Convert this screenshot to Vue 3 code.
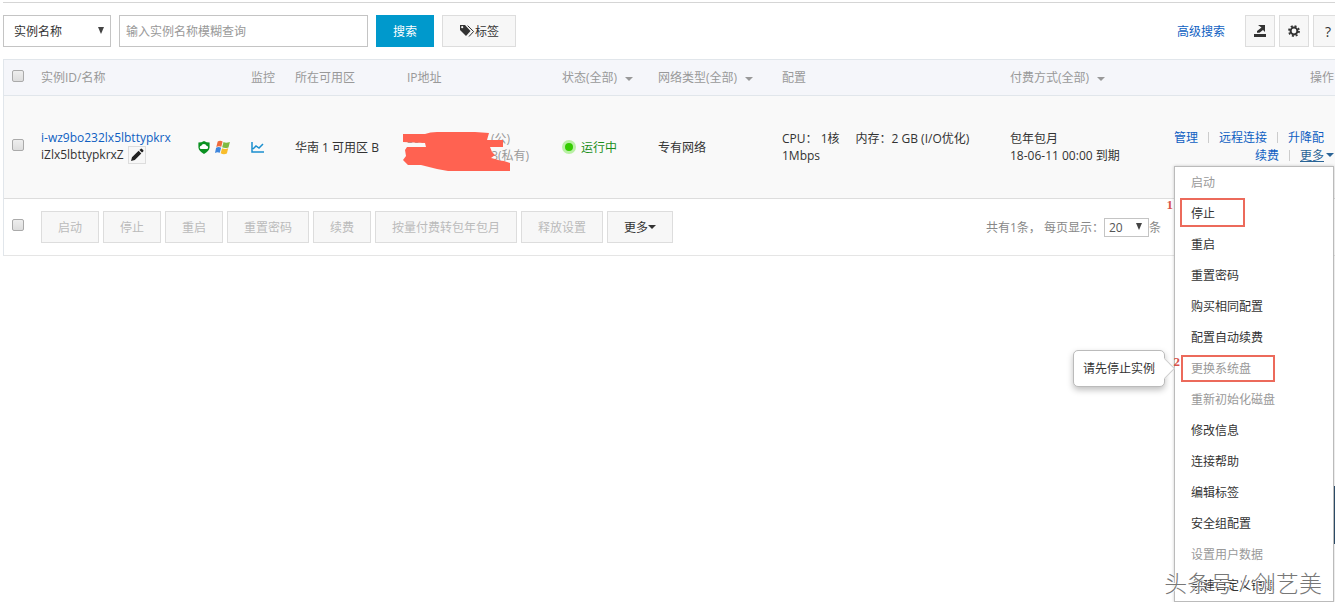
<template>
  <div class="page">
    <form class="toolbar" @submit.prevent>
      <div class="select-wrap field-select">
        <select v-model="field" aria-label="查询字段">
          <option>实例名称</option>
          <option>实例ID</option>
        </select>
      </div>
      <input v-model="keyword" class="keyword" type="text" aria-label="关键字" placeholder="输入实例名称模糊查询" />
      <button class="btn primary" type="submit">搜索</button>
      <button class="btn tag-btn" type="button">
        <svg width="16" height="14" viewBox="0 0 16 14" aria-hidden="true">
          <path d="M1 1h5l5.500 6-4.500 5L1 6z" fill="#333" />
          <circle cx="3.2" cy="3.2" r="1.1" fill="#f7f7f7" />
          <path d="M8.600 1.600l6 5.900-4.600 5" fill="none" stroke="#333" />
        </svg>标签
      </button>
      <div class="tools">
        <a href="#" class="advanced">高级搜索</a>
        <button class="btn icon" type="button" aria-label="导出">
          <svg width="12" height="14" viewBox="0 0 12 14" aria-hidden="true">
            <path d="M0 10h12v3H0zM4 1h7v7L9 6 5.500 8.800H3V7l4.500-3.500z" fill="#333" />
          </svg>
        </button>
        <button class="btn icon" type="button" aria-label="设置">
          <svg width="12" height="12" viewBox="0 0 12 12" aria-hidden="true">
            <g fill="none" stroke="#333">
              <circle cx="6" cy="6" r="3.4" stroke-width="2" />
              <circle cx="6" cy="6" r="5" stroke-width="1.8" stroke-dasharray="2 1.927" />
            </g>
          </svg>
        </button>
        <button class="btn icon help" type="button">?</button>
      </div>
    </form>

    <table class="instances">
      <colgroup>
        <col v-for="c in cols" :key="c" :class="'col-' + c" />
      </colgroup>
      <thead>
        <tr>
          <th class="check"><input type="checkbox" aria-label="全选" /></th>
          <th>实例ID/名称</th>
          <th>监控</th>
          <th>所在可用区</th>
          <th>IP地址</th>
          <th>状态(全部)<i class="caret"></i></th>
          <th>网络类型(全部)<i class="caret"></i></th>
          <th>配置</th>
          <th>付费方式(全部)<i class="caret"></i></th>
          <th class="actions">操作</th>
        </tr>
      </thead>
      <tbody>
        <tr>
          <td class="check"><input type="checkbox" aria-label="选择实例" /></td>
          <td>
            <div class="name-cell">
              <div class="raised">
                <a href="#">i-wz9bo232lx5lbttypkrx</a>
                <div class="alias">
                  iZlx5lbttypkrxZ
                  <button class="edit" type="button" aria-label="修改名称">
                    <svg width="14" height="14" viewBox="0 0 14 14" aria-hidden="true">
                      <path d="M1 13l1-3.8 6.6-6.5 2.7 2.7-6.5 6.6zM9.4 2l1.2-1.1q.7-.6 1.4 0l1.2 1.2q.6.7 0 1.4L12 4.6z" fill="#222" />
                    </svg>
                  </button>
                </div>
              </div>
              <div class="os-icons">
                <svg width="12" height="13" viewBox="0 0 12 13" aria-hidden="true">
                  <path d="M6 0q2.5 1.6 5.6 1.6v5Q11 10.6 6 13 1 10.6.4 6.6v-5Q3.500 1.600 6 0z" fill="#0b9121" />
                  <path d="M3.300 8a1.600 1.600 0 0 1 0-3.200 2.700 2.500 0 0 1 5.200 0 1.600 1.600 0 0 1 0 3.200z" fill="#fff" />
                </svg>
                <svg width="16" height="15" viewBox="0 0 16 15" aria-hidden="true">
                  <path d="M2.700 1.600Q5 .2 7.600 1.500L6.300 6.700Q3.800 5.500 1.300 6.900z" fill="#ef6b3c" />
                  <path d="M8.500 2Q11 3.400 14.900 1.900L13.500 7.400Q10 8.700 7.200 7.200z" fill="#7fba42" />
                  <path d="M1.100 7.800Q3.600 6.500 6.100 7.700L4.800 12.700Q2.300 11.500 0 12.900z" fill="#3f86dd" />
                  <path d="M7 8.200Q9.700 9.600 13.200 8.300L11.900 13.500Q8.600 14.900 5.700 13.200z" fill="#f8bd2c" />
                </svg>
              </div>
            </div>
          </td>
          <td>
            <a href="#" class="chart" aria-label="监控图">
              <svg width="13" height="11" viewBox="0 0 13 11" aria-hidden="true">
                <path d="M1 0v10h12M2 7l3-3 3 2 4-4" fill="none" stroke="#1b8fce" stroke-width="1.500" />
              </svg>
            </a>
          </td>
          <td>华南 1 可用区 B</td>
          <td>
            <div class="ip-cell">
              <div><span class="ip-num">39.1</span>(公)</div>
              <div><span class="ip-num private">3</span>(私有)</div>
              <svg class="scribble" width="110" height="40" viewBox="0 0 110 40" aria-hidden="true">
                <path d="M0 2h22q5-2 12-2h38l14 1-2 7h16v7H87l2 5 3 3-4 3 4 1q5 2 9 2l6 2v8H45L34 37 18 33 5 33 0 28l3-4-1-6 2-3h19l-1-4L0 10z" fill="#ff6251" />
              </svg>
            </div>
          </td>
          <td class="status">
            <span class="running"><i class="dot"></i>运行中</span>
          </td>
          <td>专有网络</td>
          <td>
            <div class="config">
              <span>CPU： 1核</span>
              <span>内存：2 GB (I/O优化)</span>
            </div>
            <div>1Mbps</div>
          </td>
          <td>包年包月<br />18-06-11 00:00 到期</td>
          <td class="actions">
            <div class="raised">
              <div class="links first">
                <a href="#">管理</a><i class="sep"></i><a href="#">远程连接</a><i class="sep"></i><a href="#">升降配</a>
              </div>
              <div class="links">
                <a href="#">续费</a><i class="sep"></i>
                <div class="more">
                  <a href="#" class="more-link">更多</a><i class="caret"></i>
                  <ul class="menu">
                    <li v-for="item in menu" :key="item.text" :class="{ disabled: item.disabled }">
                      <a href="#">{{ item.text }}</a>
                      <div v-if="item.mark" class="mark" :class="'mark-' + item.mark"><b>{{ item.mark }}</b></div>
                      <div v-if="item.tip" class="tip">{{ item.tip }}</div>
                    </li>
                  </ul>
                </div>
              </div>
            </div>
          </td>
        </tr>
      </tbody>
      <tfoot>
        <tr>
          <td class="check"><input type="checkbox" aria-label="全选本页" /></td>
          <td colspan="9">
            <div class="footer">
              <div class="batch">
                <button v-for="b in batch" :key="b" class="btn" type="button" disabled>{{ b }}</button>
                <button class="btn" type="button">更多<i class="caret"></i></button>
              </div>
              <div class="pager">
                <label for="size">共有1条， 每页显示：</label>
                <div class="select-wrap size-select">
                  <select id="size" v-model="pageSize">
                    <option>20</option>
                    <option>50</option>
                  </select>
                </div>
                <span>条</span>
              </div>
            </div>
          </td>
        </tr>
      </tfoot>
    </table>

    <div class="side-tab"></div>
    <div class="watermark">头条号 / 创艺美</div>
  </div>
</template>

<script setup>
import { ref } from 'vue'

const field = ref('实例名称')
const keyword = ref('')
const pageSize = ref('20')

const cols = ['check', 'name', 'monitor', 'zone', 'ip', 'status', 'network', 'config', 'pay', 'actions']

const batch = ['启动', '停止', '重启', '重置密码', '续费', '按量付费转包年包月', '释放设置']

const menu = [
  { text: '启动', disabled: true },
  { text: '停止', mark: 1 },
  { text: '重启' },
  { text: '重置密码' },
  { text: '购买相同配置' },
  { text: '配置自动续费' },
  { text: '更换系统盘', disabled: true, mark: 2, tip: '请先停止实例' },
  { text: '重新初始化磁盘', disabled: true },
  { text: '修改信息' },
  { text: '连接帮助' },
  { text: '编辑标签' },
  { text: '安全组配置' },
  { text: '设置用户数据', disabled: true },
  { text: '创建自定义镜像' }
]
</script>

<style>
body {
  overflow: hidden;
}
</style>

<style scoped>
.page {
  position: relative;
  min-height: 100vh;
  box-sizing: border-box;
  padding: 2px 0 0 3px;
  overflow: hidden;
  background: #fff;
  color: #333;
  font: 12px/17px "Open Sans", "Noto Sans CJK SC", sans-serif;
}

a {
  color: #0f5fc2;
  text-decoration: none;
}

button,
input,
select {
  box-sizing: border-box;
  margin: 0;
  font: inherit;
  color: inherit;
}

/* toolbar */
.toolbar {
  display: flex;
  gap: 8px;
  margin-right: -8px;
  padding: 12px 0;
  border-top: 1px solid #d5d5d5;
}

.select-wrap {
  position: relative;
}

.select-wrap select {
  appearance: none;
  width: 100%;
  height: 100%;
  padding: 0 10px;
  border: 1px solid #c4c4c4;
  border-radius: 0;
  background: #fff;
}

.select-wrap::after {
  content: "";
  position: absolute;
  top: 50%;
  right: 7px;
  margin-top: -4px;
  border: 3px solid transparent;
  border-top: 7px solid #444;
  border-bottom: 0;
  pointer-events: none;
}

.field-select {
  width: 108px;
}

.keyword {
  width: 249px;
  height: 32px;
  padding: 0 6px;
  border: 1px solid #c4c4c4;
}

.keyword::placeholder {
  color: #999;
}

.btn {
  display: inline-flex;
  align-items: center;
  justify-content: center;
  height: 32px;
  padding: 0 16px;
  border: 1px solid #ddd;
  background: #f7f7f7;
  white-space: nowrap;
}

.btn:disabled {
  color: #bbb;
}

.btn.primary {
  border-color: #0099cc;
  background: #0099cc;
  color: #fff;
}

.tools {
  display: flex;
  align-items: center;
  gap: 4px;
  margin-left: auto;
}

.advanced {
  margin-right: 16px;
}

.btn.icon {
  width: 30px;
  padding: 0;
}

.help {
  font-size: 14px;
}

/* table */
.instances {
  width: 100%;
  table-layout: fixed;
  border-collapse: separate;
  border-spacing: 0;
  border-left: 1px solid #e1e6eb;
}

.col-check { width: 29px; }
.col-name { width: 210px; }
.col-monitor { width: 44px; }
.col-zone { width: 112px; }
.col-ip { width: 155px; }
.col-status { width: 96px; }
.col-network { width: 124px; }
.col-config { width: 228px; }
.col-pay { width: 160px; }

th,
td {
  box-sizing: border-box;
  padding: 0 0 0 8px;
  text-align: left;
  white-space: nowrap;
}

th {
  height: 37px;
  border-top: 1px solid #e1e6eb;
  border-bottom: 1px solid #e1e6eb;
  background: #f5f6fa;
  color: #999;
  font-weight: normal;
}

tbody td {
  height: 103px;
  border-bottom: 1px solid #ddd;
  background: #f9f9f9;
}

tfoot td {
  height: 57px;
  border-bottom: 1px solid #e5e5e5;
}

.check input {
  display: block;
  appearance: none;
  width: 12px;
  height: 12px;
  margin-bottom: 4px;
  border: 1px solid #aaa;
  border-radius: 2px;
  background: linear-gradient(#eee, #ddd);
}

.caret {
  display: inline-block;
  border: 4px solid transparent;
  border-top-color: currentColor;
  border-bottom: 0;
  vertical-align: middle;
}

th .caret {
  margin-left: 8px;
}

.raised {
  padding-bottom: 2px;
}

.name-cell {
  display: flex;
  align-items: center;
}

.name-cell .raised {
  width: 157px;
}

.alias {
  display: flex;
  align-items: center;
  gap: 4px;
  height: 18px;
}

.edit {
  width: 18px;
  height: 18px;
  padding: 1px;
  border: 1px solid #ddd;
  background: #f7f7f7;
}

.edit svg,
.chart svg {
  display: block;
}

.os-icons {
  display: flex;
  align-items: center;
  gap: 5px;
}

.ip-cell {
  position: relative;
  color: #999;
}

.ip-num {
  display: inline-block;
  width: 84px;
}

.ip-num.private {
  width: 91px;
  text-align: right;
}

.scribble {
  position: absolute;
  top: 2px;
  left: -4px;
}

.running {
  display: flex;
  align-items: center;
  gap: 5px;
  color: #1b8f1b;
}

.dot {
  width: 8px;
  height: 8px;
  border: 3px solid #b9f0a5;
  border-radius: 50%;
  background: #33cc00;
}

.config {
  display: flex;
  gap: 16px;
}

/* row actions */
th.actions,
td.actions {
  padding-right: 1px;
  text-align: right;
}

.links {
  display: flex;
  align-items: center;
  justify-content: flex-end;
  height: 18px;
}

.links.first {
  padding-right: 10px;
}

.sep {
  width: 1px;
  height: 11px;
  margin: 0 10px;
  background: #ccc;
}

.more {
  position: relative;
  display: flex;
  align-items: center;
  gap: 2px;
  color: #2a6496;
}

.more-link {
  color: #2a6496;
  text-decoration: underline;
}

.menu {
  position: absolute;
  top: 100%;
  right: 0;
  z-index: 2;
  width: 158px;
  margin: 2px 0 0;
  padding: 0;
  border: 1px solid #bbb;
  background: #fff;
  box-shadow: 0 0 3px rgba(0, 0, 0, 0.2);
  list-style: none;
  text-align: left;
}

.menu li {
  position: relative;
  height: 31px;
  padding-left: 16px;
  line-height: 31px;
}

.menu a {
  color: #333;
}

.menu .disabled a {
  color: #999;
}

.mark {
  position: absolute;
  top: 0;
  left: 5px;
  box-sizing: border-box;
  width: 65px;
  height: 29px;
  border: 2px solid #ec6a5b;
}

.mark-2 {
  top: 2px;
  left: 6px;
  width: 94px;
  height: 27px;
}

.mark b {
  position: absolute;
  top: -4px;
  right: 100%;
  margin-right: 9px;
  color: #d9534a;
  font: bold 13px/17px "Liberation Serif", serif;
}

.mark-2 b {
  margin-right: 3px;
}

.tip {
  position: absolute;
  top: -3px;
  right: 100%;
  margin-right: 10px;
  padding: 0 9px;
  border: 1px solid #bbb;
  border-radius: 5px;
  background: #fff;
  box-shadow: 0 3px 6px rgba(0, 0, 0, 0.25);
  color: #333;
  line-height: 35px;
}

.tip::after {
  content: "";
  position: absolute;
  top: 10px;
  right: -8px;
  width: 14px;
  height: 14px;
  border: 1px solid #ccc;
  border-width: 1px 1px 0 0;
  background: #fff;
  transform: rotate(45deg);
}

/* footer */
.footer {
  display: flex;
  align-items: center;
  justify-content: space-between;
  padding-right: 174px;
}

.batch {
  display: flex;
  gap: 4px;
}

.pager {
  display: flex;
  align-items: center;
  color: #888;
}

.size-select {
  width: 45px;
  height: 19px;
}

.size-select select {
  padding: 0 4px;
  color: #555;
}

.side-tab {
  position: absolute;
  right: 0;
  bottom: 58px;
  z-index: 3;
  width: 1px;
  height: 58px;
  background: #2b4a66;
}

.watermark {
  position: absolute;
  right: 13px;
  bottom: 3px;
  z-index: 4;
  color: #777;
  font-size: 23px;
  font-weight: 300;
  line-height: 32px;
  text-shadow: -1px -1px 0 #fff, 1px 0 0 #fff;
}
</style>
